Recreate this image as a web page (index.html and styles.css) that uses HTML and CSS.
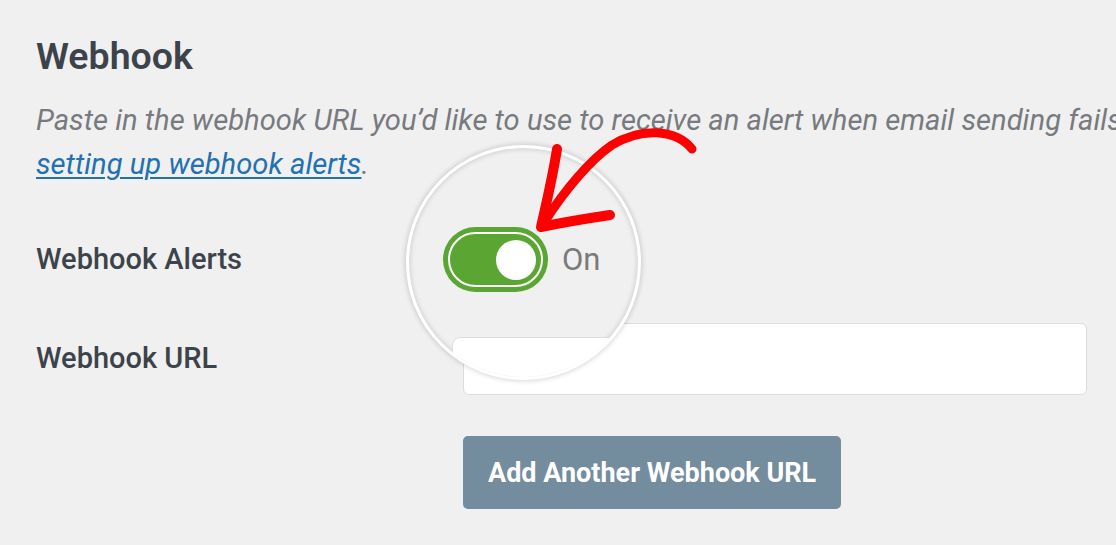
FILE: index.html
```html
<!DOCTYPE html>
<html lang="en">
<head>
<meta charset="utf-8">
<title>Webhook</title>
<link rel="stylesheet" href="styles.css">
</head>
<body>
<div class="page">
  <h2 class="title">Webhook</h2>
  <p class="desc">Paste in the webhook URL you’d like to use to receive an alert when email sending fails. Read our documentation on<br><a href="#" class="link">setting up webhook alerts</a>.</p>

  <div class="row row-toggle">
    <div class="label">Webhook Alerts</div>
    <div class="field field-toggle">
      <span class="toggle"><span class="track"><span class="knob"></span></span></span>
      <span class="state">On</span>
    </div>
  </div>

  <div class="row row-url">
    <div class="label">Webhook URL</div>
    <div class="field">
      <div class="input"></div>
    </div>
  </div>

  <div class="row row-btn">
    <div class="label"></div>
    <div class="field">
      <button class="btn" type="button">Add Another Webhook URL</button>
    </div>
  </div>

  <div class="lens" aria-hidden="true">
    <div class="lens-input"></div>
  </div>

  <svg class="arrow" width="1116" height="545" viewBox="0 0 1116 545" aria-hidden="true">
    <path d="M692,149 C675,128 640,128 612,145 C590,160 565,190 545,221" fill="none" stroke="#fe0000" stroke-width="9" stroke-linecap="round" stroke-linejoin="round"/>
    <path d="M557,149 C553,175 546,205 541,227 C565,222 590,218 610,215" fill="none" stroke="#fe0000" stroke-width="10" stroke-linecap="round" stroke-linejoin="round"/>
  </svg>
</div>
</body>
</html>
```
FILE: styles.css
```css
html, body {
  margin: 0;
  padding: 0;
  background: #f0f0f0;
  overflow: hidden;
}
body {
  width: 1116px;
  height: 545px;
  font-family: Roboto, "Liberation Sans", Arial, sans-serif;
  color: #3c434a;
}
.page {
  position: relative;
  width: 1116px;
  height: 545px;
  padding: 34px 0 0 36px;
  box-sizing: border-box;
  overflow: hidden;
}
.title {
  margin: 0;
  font-size: 37.5px;
  line-height: 44px;
  font-weight: 600;
  color: #3c434a;
}
.desc {
  margin: 20px 0 0;
  font-size: 29.2px;
  line-height: 44px;
  font-style: italic;
  color: #777a7e;
  white-space: nowrap;
}
.link {
  color: #2271b1;
  text-decoration: underline;
  text-underline-offset: 3px;
  text-decoration-thickness: 2px;
}
.row {
  display: flex;
  align-items: center;
}
.label {
  width: 427px;
  flex: none;
  font-size: 29px;
  line-height: 34px;
  font-weight: 500;
  padding-bottom: 2px;
}
.row-toggle {
  margin-top: 41px;
  position: relative;
  z-index: 2;
}
.field-toggle {
  display: flex;
  align-items: center;
  margin-left: -20px;
}
.toggle {
  display: block;
  width: 105px;
  height: 65px;
  box-sizing: border-box;
  padding: 5px;
  border-radius: 33px;
  background: #5ba532;
}
.track {
  display: flex;
  align-items: center;
  justify-content: flex-end;
  height: 100%;
  box-sizing: border-box;
  border: 2px solid #fff;
  border-radius: 28px;
  padding-right: 5px;
}
.knob {
  display: block;
  width: 40px;
  height: 40px;
  border-radius: 50%;
  background: #fff;
}
.state {
  margin-left: 14px;
  font-size: 31px;
  line-height: 34px;
  color: #7a7a7a;
}
.row-url {
  margin-top: 31px;
}
.input {
  width: 624px;
  height: 72px;
  box-sizing: border-box;
  background: #fff;
  border: 1px solid #dcdcde;
  border-radius: 6px;
}
.row-btn {
  margin-top: 41px;
}
.btn {
  height: 73px;
  padding: 0 25px;
  border: 0;
  border-radius: 5px;
  background: #738c9e;
  color: #fff;
  font-family: Roboto, "Liberation Sans", Arial, sans-serif;
  font-size: 27px;
  font-weight: 700;
}
.lens {
  position: absolute;
  left: 406px;
  top: 145px;
  width: 235px;
  height: 235px;
  box-sizing: border-box;
  border-radius: 50%;
  border: 3px solid #fff;
  background: #f0f0f0;
  overflow: hidden;
  z-index: 1;
  box-shadow: 0 0 5px 1px rgba(0, 0, 0, 0.16), inset 0 0 5px 1px rgba(0, 0, 0, 0.14);
}
.lens-input {
  position: absolute;
  left: 43px;
  top: 189px;
  width: 700px;
  height: 200px;
  box-sizing: border-box;
  background: #fff;
  border: 1px solid #dcdcde;
  border-radius: 8px;
}
.arrow {
  position: absolute;
  left: 0;
  top: 0;
  z-index: 3;
  pointer-events: none;
}
```
